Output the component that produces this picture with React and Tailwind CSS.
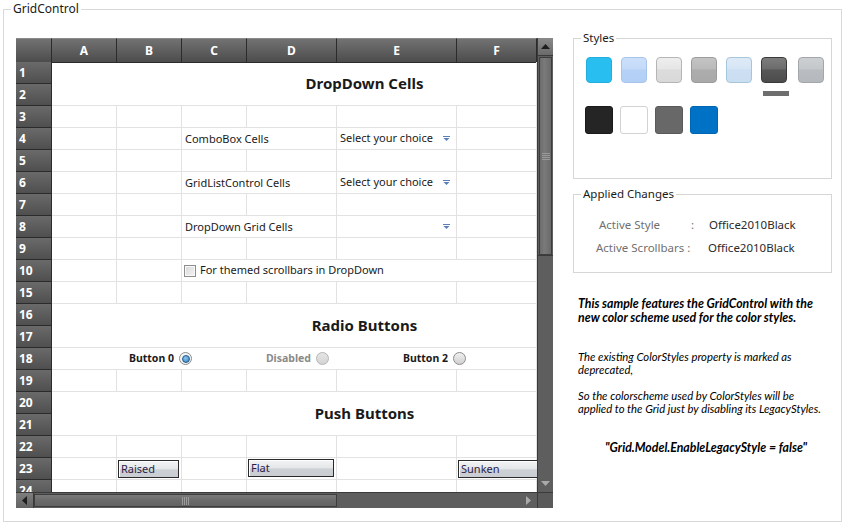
import React from "react";

const COLS = "grid grid-cols-[36px_65px_65px_65px_90px_120px_80px]";

function RH({ n }) {
  return (
    <div className="bg-[linear-gradient(#6a6a6a,#4f4f4f)] border-r border-b border-[#2b2b2b] text-white font-bold text-[12px] leading-[21px] pl-[3px]">
      {n}
    </div>
  );
}

function C({ children, className = "" }) {
  return <div className={"border-r border-b border-[#e2e2e2] " + className}>{children}</div>;
}

function Empty({ n }) {
  return (
    <>
      <RH n={n} />
      <C />
      <C />
      <C />
      <C />
      <C />
      <C />
    </>
  );
}

function Arrow() {
  return (
    <svg width="7" height="5" viewBox="0 0 7 5" className="block">
      <rect x="0" y="0" width="7" height="1" fill="#5b7fb8" />
      <polygon points="0.5,2 6.5,2 3.5,5" fill="#5b7fb8" />
    </svg>
  );
}

function Radio({ state }) {
  if (state === "on")
    return (
      <div className="w-[13px] h-[13px] rounded-full border border-[#8c8c8c] bg-[#f4f4f4] flex items-center justify-center">
        <div className="w-[8px] h-[8px] rounded-full border border-[#22598a] bg-[radial-gradient(circle_at_40%_35%,#8fc6ee,#2f7fc0)]" />
      </div>
    );
  if (state === "dis")
    return <div className="w-[13px] h-[13px] rounded-full border border-[#b4b4b4] bg-[linear-gradient(#e6e6e6,#d4d4d4)]" />;
  return <div className="w-[13px] h-[13px] rounded-full border border-[#8c8c8c] bg-[linear-gradient(#f0f0f0,#d0d0d0)]" />;
}

function PushBtn({ label, className = "" }) {
  return (
    <div className={"h-[18px] border border-[#2a2a2a] bg-[linear-gradient(#f3f4f5_0%,#e4e6e8_50%,#cdd0d4_55%,#c9ccd0_100%)] shadow-[inset_1px_1px_0_#ffffff] text-[11px] leading-[15px] pl-[2px] text-[#2b1d4a] " + className}>
      {label}
    </div>
  );
}

function Swatch({ cls }) {
  return <div className={"w-[26px] h-[26px] rounded-[4px] border " + cls} />;
}

export default function App() {
  return (
    <div className="w-[849px] h-[525px] bg-white font-['Noto_Sans',sans-serif] text-[#1a1a1a] overflow-hidden">
      <fieldset className="ml-[3px] w-[839px] h-[522px] border border-[#d9d9d9]">
        <legend className="ml-[7px] px-[2px] text-[12px] leading-[18px] text-[#1a1a1a]">GridControl</legend>
        <div className="flex items-start pl-[12px]">
          {/* GRID */}
          <div className="mt-[20px] w-[537px] flex flex-col">
            <div className="flex">
              <div className="w-[521px] h-[454px] overflow-hidden flex flex-col bg-white">
                <div className={COLS + " h-[24px] shrink-0"}>
                  {["", "A", "B", "C", "D", "E", "F"].map((h, i) => (
                    <div
                      key={i}
                      className="bg-[linear-gradient(#727272,#4c4c4c)] border-r border-b border-[#2b2b2b] text-white font-bold text-[12px] leading-[23px] text-center border-t border-t-[#8a8a8a]"
                    >
                      {h}
                    </div>
                  ))}
                </div>
                <div className={COLS + " auto-rows-[22px]"}>
                  <RH n="1" />
                  <div className="col-span-6 row-span-2 border-r border-b border-[#e2e2e2] flex items-center justify-center pl-[141px] font-bold text-[15px]">
                    DropDown Cells
                  </div>
                  <RH n="2" />
                  <Empty n="3" />
                  <RH n="4" />
                  <C />
                  <C />
                  <C className="col-span-2 text-[11px] leading-[21px] pl-[3px]">ComboBox Cells</C>
                  <C className="flex items-center justify-between pl-[3px] pr-[6px] text-[11px]">
                    <span>Select your choice</span>
                    <Arrow />
                  </C>
                  <C />
                  <Empty n="5" />
                  <RH n="6" />
                  <C />
                  <C />
                  <C className="col-span-2 text-[11px] leading-[21px] pl-[3px]">GridListControl Cells</C>
                  <C className="flex items-center justify-between pl-[3px] pr-[6px] text-[11px]">
                    <span>Select your choice</span>
                    <Arrow />
                  </C>
                  <C />
                  <Empty n="7" />
                  <RH n="8" />
                  <C />
                  <C />
                  <C className="col-span-2 text-[11px] leading-[21px] pl-[3px]">DropDown Grid Cells</C>
                  <C className="flex items-center justify-end pr-[6px]">
                    <Arrow />
                  </C>
                  <C />
                  <Empty n="9" />
                  <RH n="10" />
                  <C />
                  <C />
                  <C className="col-span-4 flex items-center gap-[4px] pl-[2px] text-[11px]">
                    <div className="w-[12px] h-[12px] border border-[#8e8e8e] bg-[linear-gradient(135deg,#d8d8d8,#f4f4f4)] shadow-[inset_0_0_0_1px_#f8f8f8]" />
                    <span>For themed scrollbars in DropDown</span>
                  </C>
                  <Empty n="15" />
                  <RH n="16" />
                  <div className="col-span-6 row-span-2 border-r border-b border-[#e2e2e2] flex items-center justify-center pl-[141px] font-bold text-[15px]">
                    Radio Buttons
                  </div>
                  <RH n="17" />
                  <RH n="18" />
                  <div className="col-span-6 border-r border-b border-[#e2e2e2] flex items-center pl-[3px] font-bold text-[10.5px]">
                    <div className="w-[137px] flex items-center justify-end gap-[5px]">
                      <span>Button 0</span>
                      <Radio state="on" />
                    </div>
                    <div className="w-[137px] flex items-center justify-end gap-[5px] text-[#8a8a8a]">
                      <span>Disabled</span>
                      <Radio state="dis" />
                    </div>
                    <div className="w-[137px] flex items-center justify-end gap-[5px]">
                      <span>Button 2</span>
                      <Radio state="off" />
                    </div>
                  </div>
                  <Empty n="19" />
                  <RH n="20" />
                  <div className="col-span-6 row-span-2 border-r border-b border-[#e2e2e2] flex items-center justify-center pl-[141px] font-bold text-[15px]">
                    Push Buttons
                  </div>
                  <RH n="21" />
                  <Empty n="22" />
                  <RH n="23" />
                  <C />
                  <C className="pl-[1px] pr-[2px] pt-[2px]">
                    <PushBtn label="Raised" />
                  </C>
                  <C />
                  <C className="pl-[1px] pr-[2px] pt-[1px]">
                    <PushBtn label="Flat" />
                  </C>
                  <C />
                  <C className="pl-[1px] pt-[2px]">
                    <PushBtn label="Sunken" className="w-[90px]" />
                  </C>
                  <Empty n="24" />
                </div>
              </div>
              {/* vertical scrollbar */}
              <div className="w-[16px] h-[454px] flex flex-col bg-[#5e5e5e] border-l border-[#3a3a3a]">
                <div className="h-[18px] bg-[linear-gradient(#8a8a8a,#6a6a6a)] border-b border-[#3a3a3a] flex items-center justify-center">
                  <svg width="9" height="5" viewBox="0 0 9 5"><polygon points="0,5 9,5 4.5,0" fill="#1e1e1e" /></svg>
                </div>
                <div className="h-[198px] mx-[1px] mt-[1px] border border-[#3d3d3d] bg-[linear-gradient(90deg,#6c6c6c,#7a7a7a_40%,#6a6a6a)] flex items-center justify-center">
                  <div className="flex flex-col gap-[1px]">
                    <div className="w-[8px] h-[1px] bg-[#9a9a9a]" />
                    <div className="w-[8px] h-[1px] bg-[#9a9a9a]" />
                    <div className="w-[8px] h-[1px] bg-[#9a9a9a]" />
                    <div className="w-[8px] h-[1px] bg-[#9a9a9a]" />
                  </div>
                </div>
                <div className="flex-1 border-t border-[#3a3a3a]" />
                <div className="h-[17px] flex items-center justify-center">
                  <svg width="9" height="5" viewBox="0 0 9 5"><polygon points="0,0 9,0 4.5,5" fill="#a9a9a9" /></svg>
                </div>
              </div>
            </div>
            {/* horizontal scrollbar */}
            <div className="flex h-[16px]">
              <div className="w-[521px] flex bg-[#5e5e5e] border-t border-[#3a3a3a]">
                <div className="w-[18px] bg-[linear-gradient(#7e7e7e,#626262)] border-r border-[#3a3a3a] flex items-center justify-center">
                  <svg width="5" height="9" viewBox="0 0 5 9"><polygon points="5,0 5,9 0,4.5" fill="#1e1e1e" /></svg>
                </div>
                <div className="w-[303px] my-[1px] border border-[#3d3d3d] bg-[linear-gradient(#7a7a7a,#6a6a6a_50%,#626262)] flex items-center justify-center">
                  <div className="flex gap-[1px]">
                    <div className="w-[1px] h-[8px] bg-[#9a9a9a]" />
                    <div className="w-[1px] h-[8px] bg-[#9a9a9a]" />
                    <div className="w-[1px] h-[8px] bg-[#9a9a9a]" />
                    <div className="w-[1px] h-[8px] bg-[#9a9a9a]" />
                  </div>
                </div>
                <div className="flex-1" />
                <div className="w-[17px] flex items-center justify-center">
                  <svg width="5" height="9" viewBox="0 0 5 9"><polygon points="0,0 0,9 5,4.5" fill="#a9a9a9" /></svg>
                </div>
              </div>
              <div className="w-[16px] bg-[#5a5a5a] border-t border-l border-[#3a3a3a]" />
            </div>
          </div>

          {/* RIGHT PANEL */}
          <div className="ml-[20px] w-[259px] flex flex-col">
            <fieldset className="mt-[13px] h-[148px] border border-[#d6d6d6]">
              <legend className="ml-[7px] px-[2px] text-[11.5px] leading-[14px]">Styles</legend>
              <div className="pl-[12px] pt-[12px] flex gap-[9px]">
                <Swatch cls="bg-[#28bff0] border-[#22aee0]" />
                <Swatch cls="bg-[linear-gradient(#cde0fa_0%,#c3daf8_45%,#b5d1f6_50%,#b2cff5_100%)] border-[#a8c4ea]" />
                <Swatch cls="bg-[linear-gradient(#eeeeee_0%,#e6e6e6_45%,#dcdcdc_50%,#d9d9d9_100%)] border-[#b5b5b5]" />
                <Swatch cls="bg-[linear-gradient(#c4c4c4_0%,#bababa_45%,#adadad_50%,#a9a9a9_100%)] border-[#9c9c9c]" />
                <Swatch cls="bg-[linear-gradient(#dfeaf7_0%,#d6e5f5_45%,#ccdff3_50%,#cadef2_100%)] border-[#a6c6dc]" />
                <div className="flex flex-col">
                  <Swatch cls="bg-[linear-gradient(#7c7c7c_0%,#6c6c6c_45%,#575757_50%,#4c4c4c_100%)] border-[#3a3a3a]" />
                  <div className="mt-[8px] ml-[2px] w-[26px] h-[5px] bg-[#6e6e6e]" />
                </div>
                <Swatch cls="bg-[linear-gradient(#cdd0d3_0%,#c5c8cb_45%,#b9bcc0_50%,#b5b8bc_100%)] border-[#a3a6aa]" />
              </div>
              <div className="pl-[11px] mt-[10px] flex gap-[7px]">
                <div className="w-[28px] h-[28px] rounded-[3px] bg-[#252525] border border-[#1a1a1a]" />
                <div className="w-[28px] h-[28px] rounded-[3px] bg-white border border-[#d2d2d2]" />
                <div className="w-[28px] h-[28px] rounded-[3px] bg-[#686868] border border-[#5a5a5a]" />
                <div className="w-[28px] h-[28px] rounded-[3px] bg-[#0072c6] border border-[#0066b3]" />
              </div>
            </fieldset>
            <fieldset className="mt-[8px] h-[86px] border border-[#d6d6d6]">
              <legend className="ml-[7px] px-[2px] text-[11.5px] leading-[14px]">Applied Changes</legend>
              <div className="pt-[16px] text-[11.5px] leading-[16px]">
                <div className="flex pl-[25px]">
                  <span className="w-[92px] text-[#707070]">Active Style</span>
                  <span className="w-[18px] text-[#707070]">:</span>
                  <span className="text-[#2a2a2a]">Office2010Black</span>
                </div>
                <div className="flex pl-[22px] mt-[7px]">
                  <span className="w-[112px] text-[#707070]">Active Scrollbars :</span>
                  <span className="text-[#2a2a2a]">Office2010Black</span>
                </div>
              </div>
            </fieldset>
            <div className="mt-[24px] pl-[5px] font-['Lato',sans-serif] italic text-[11.3px] leading-[13px] text-black">
              <div className="font-bold text-[12.3px] leading-[14px]">
                This sample features the GridControl with the
                <br />
                new color scheme used for the color styles.
              </div>
              <div className="mt-[25px]">
                The existing ColorStyles property is marked as
                <br />
                deprecated,
              </div>
              <div className="mt-[13px]">
                So the colorscheme used by ColorStyles will be
                <br />
                applied to the Grid just by disabling its LegacyStyles.
              </div>
              <div className="mt-[26px] pl-[27px] font-bold text-[12.3px] leading-[14px]">"Grid.Model.EnableLegacyStyle = false"</div>
            </div>
          </div>
        </div>
      </fieldset>
    </div>
  );
}
